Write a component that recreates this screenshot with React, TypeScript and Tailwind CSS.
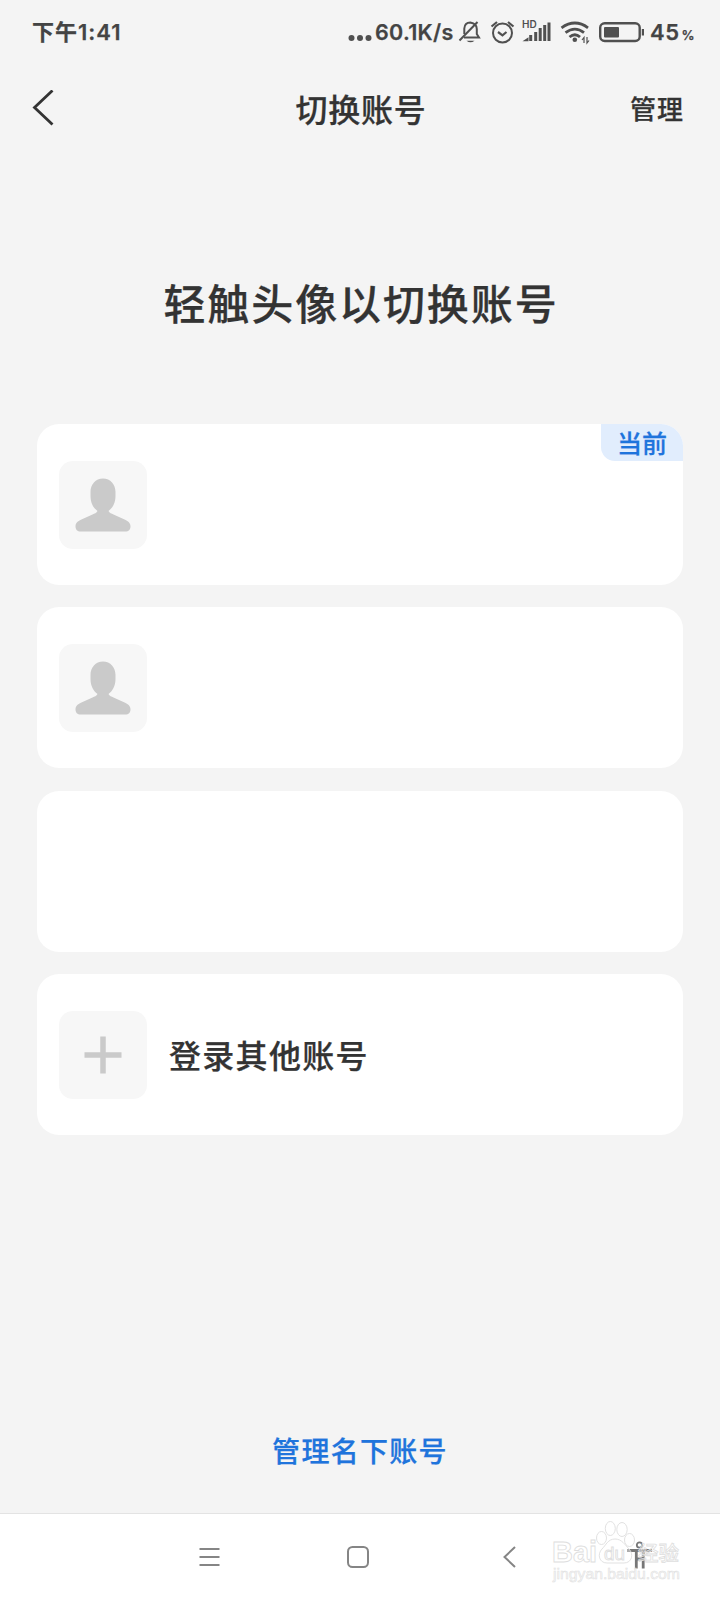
const CJK = "font-['Noto_Sans_CJK_SC',sans-serif]";
const LATIN = "font-['Inter','Noto_Sans_CJK_SC',sans-serif]";

const accounts = [
  { id: 1, avatar: true, current: true },
  { id: 2, avatar: true, current: false },
  { id: 3, avatar: false, current: false },
];

function StatusIcons() {
  return (
    <svg width="186" height="40" viewBox="458 12 186 40" fill="none" stroke="#505050" strokeWidth="2" className="shrink-0">
      {/* muted bell */}
      <path d="M464 37.500h15l-2.200-3.500V29q0-5.500-6.500-6.500-5.500 0-6 6v5.500" />
      <path d="M459.500 40.500 477.500 22" />
      <path d="M466.500 40.700h8q-4 3-8 0z" fill="#505050" stroke="none" />
      {/* alarm */}
      <circle cx="502.500" cy="33" r="9.500" />
      <path d="M498 32l4.500 3.300 4-3.300M491.500 26.500l5.500-4.500M513.500 26.500l-5.500-4.500" strokeWidth="2.200" />
      {/* signal */}
      <path d="M530.700 41v-6M535.700 41V32M540.200 41V28M544.700 41V25M549 41V22.500" strokeWidth="3" />
      <path d="M522.500 41.200l6-4v4z" fill="#505050" stroke="none" />
      <text x="522" y="28.300" fontSize="10" fontWeight="600" fill="#505050" stroke="none" fontFamily="Inter, sans-serif">
        HD
      </text>
      {/* wifi */}
      <path d="M561.500 27.800q13.500-9.500 26.500 0M565.500 32.600q9.500-7 18.500 0M569.500 37q5.500-4.500 10.500 0" strokeWidth="2.800" />
      <circle cx="574.800" cy="39.800" r="2.300" fill="#505050" stroke="none" />
      <path d="M584 43v-5.500l-2 2.500M587 37v6l2-2.500" strokeWidth="1.200" />
      {/* battery */}
      <rect x="600.200" y="23.200" width="39.500" height="17.800" rx="4.500" strokeWidth="2.400" />
      <rect x="604" y="27" width="15" height="10.500" rx="1" fill="#505050" stroke="none" />
      <path d="M643 29v6.500" strokeWidth="2.400" />
    </svg>
  );
}

function StatusBar() {
  return (
    <div className={`flex h-16 items-center pl-8 text-[#444] ${LATIN}`}>
      <span className="w-[315px] text-[22px] leading-none font-semibold tracking-[1px]">下午1:41</span>
      <svg width="28" height="40" viewBox="0 0 28 40" fill="#505050">
        <circle cx="4.500" cy="26" r="3" />
        <circle cx="13" cy="26" r="3" />
        <circle cx="21.500" cy="26" r="3" />
      </svg>
      <span className="mt-px w-[83px] text-[21.500px] leading-none font-semibold tracking-[0.300px] whitespace-nowrap">60.1K/s</span>
      <StatusIcons />
      <span className="ml-1.5 text-[22px] leading-none font-semibold tracking-[0.500px]">45</span>
      <span className="mt-1.5 ml-0.5 text-[13px] leading-none font-semibold">%</span>
    </div>
  );
}

function Header() {
  return (
    <header className="grid h-[88px] grid-cols-3 items-center px-8 text-[#333]">
      <svg width="22" height="36" viewBox="0 0 22 36" fill="none" stroke="#333" strokeWidth="2.800">
        <path d="M20.500 .500 2.500 17.500 20.500 34.500" />
      </svg>
      <h1 className="pl-0.5 text-center text-[32px] leading-none font-medium tracking-[0.700px] whitespace-nowrap">切换账号</h1>
      <button className="mr-1 justify-self-end text-[26px] leading-none font-medium tracking-[1px]">管理</button>
    </header>
  );
}

function Avatar() {
  return (
    <div className="flex size-[88px] items-center justify-center rounded-[14px] bg-[#f7f7f7]">
      <svg width="56" height="54" viewBox="0 0 56 54" fill="#cacaca">
        <path d="M28 .500C20.500 .500 15.500 6.500 15.500 14v4c0 7 3 12 7 15-1 2-3 2.500-5 3.500l-10 4.500C3 43 .500 44.500 .500 48.500c0 3 2 5 5 5h45c3 0 5-2 5-5 0-4-2.500-5.500-7-7.500l-10-4.500c-2-1-4-1.500-5-3.500 4-3 7-8 7-15v-4C40.500 6.500 35.500 .500 28 .500z" />
      </svg>
    </div>
  );
}

function AccountCard({ avatar, current }: { avatar: boolean; current: boolean }) {
  return (
    <div className="relative flex h-[161px] items-center overflow-hidden rounded-[22px] bg-white pl-[22px]">
      {avatar && <Avatar />}
      {current && (
        <span className="absolute top-0 right-0 flex h-[37px] w-[82px] items-center justify-center rounded-bl-[14px] bg-[#e1edfd] text-[25px] leading-none font-medium text-[#1f74dc]">
          当前
        </span>
      )}
    </div>
  );
}

function Watermark() {
  return (
    <svg width="132" height="66" viewBox="550 1518 132 66" className="absolute top-[4px] left-[550px] overflow-visible" fill="#fff" fillOpacity="0.4" stroke="#dedede" strokeWidth="0.900" fontFamily="Liberation Sans, Noto Sans CJK SC, sans-serif">
      <text x="552" y="1562" fontSize="30" fontWeight="700" textLength="45" lengthAdjust="spacingAndGlyphs">Bai</text>
      <ellipse cx="601.500" cy="1538" rx="5" ry="6.500" />
      <ellipse cx="610.300" cy="1528.500" rx="5" ry="7" />
      <ellipse cx="622" cy="1529.500" rx="5.200" ry="7" />
      <ellipse cx="629.500" cy="1540" rx="5" ry="6.500" />
      <path d="M615 1539c-7 0-9 6-13 10-5 5-3 14 5 14h17c8 0 10-9 5-14-4-4-7-10-14-10z" />
      <text x="604" y="1560" fontSize="19" fontWeight="400" textLength="21" lengthAdjust="spacingAndGlyphs">du</text>
      <text x="638" y="1561" fontSize="20.500" fontWeight="500" strokeWidth="0.800">经验</text>
      <text x="553" y="1579" fontSize="14.500" textLength="127" lengthAdjust="spacingAndGlyphs" fill="#eee" stroke="#e0e0e0" strokeWidth="0.500">
        jingyan.baidu.com
      </text>
    </svg>
  );
}

function NavigationBar() {
  return (
    <nav className="relative h-[87px] border-t border-[#e3e3e3] bg-white">
      <div className="flex h-[86px] items-center pl-[199px]">
        <svg width="21" height="20" viewBox="0 0 21 20" stroke="#858585" strokeWidth="1.800">
          <path d="M.500 2h20M.500 10h20M.500 18h20" />
        </svg>
        <svg width="22" height="22" viewBox="0 0 22 22" fill="none" stroke="#858585" strokeWidth="2" className="ml-[127px]">
          <rect x="1" y="1" width="20" height="20" rx="4.500" />
        </svg>
        <svg width="13" height="22" viewBox="0 0 13 22" fill="none" stroke="#858585" strokeWidth="2" className="ml-[134px]">
          <path d="M12 1 1.500 11 12 21" />
        </svg>
        <svg width="25" height="28" viewBox="0 0 25 28" fill="none" stroke="#777" strokeWidth="2.800" className="mb-1 ml-[111px]">
          <circle cx="12.500" cy="4" r="2.700" strokeWidth="1.800" />
          <path d="M0 9.500h25M9.300 9v18.500M16.200 9v18.500M9 18h7" />
        </svg>
      </div>
      <Watermark />
    </nav>
  );
}

export default function App() {
  return (
    <div className={`flex h-[1600px] w-[720px] flex-col overflow-hidden bg-[#f4f4f4] text-[#333] [-webkit-text-stroke:0.25px] ${CJK}`}>
      <StatusBar />
      <Header />
      <h2 className="mt-[129px] pl-0.5 text-center text-[42px] leading-[42px] font-medium tracking-[1.900px]">轻触头像以切换账号</h2>
      <main className="mt-[101px] flex flex-col gap-[22.400px] px-[37px]">
        {accounts.map((a) => (
          <AccountCard key={a.id} avatar={a.avatar} current={a.current} />
        ))}
        <button className="flex h-[161px] items-center rounded-[22px] bg-white pl-[22px]">
          <span className="flex size-[88px] items-center justify-center rounded-[14px] bg-[#f7f7f7]">
            <svg width="38" height="38" viewBox="0 0 38 38" stroke="#cacaca" strokeWidth="5.500">
              <path d="M19 .500v37M.500 19h37" />
            </svg>
          </span>
          <span className="mb-0.5 ml-[22px] text-[32px] leading-none font-medium tracking-[1.300px]">登录其他账号</span>
        </button>
      </main>
      <div className="mt-auto mb-[49px] flex justify-center">
        <button className="text-[28px] leading-[28px] font-medium tracking-[1.300px] text-[#1f74dc]">管理名下账号</button>
      </div>
      <NavigationBar />
    </div>
  );
}
